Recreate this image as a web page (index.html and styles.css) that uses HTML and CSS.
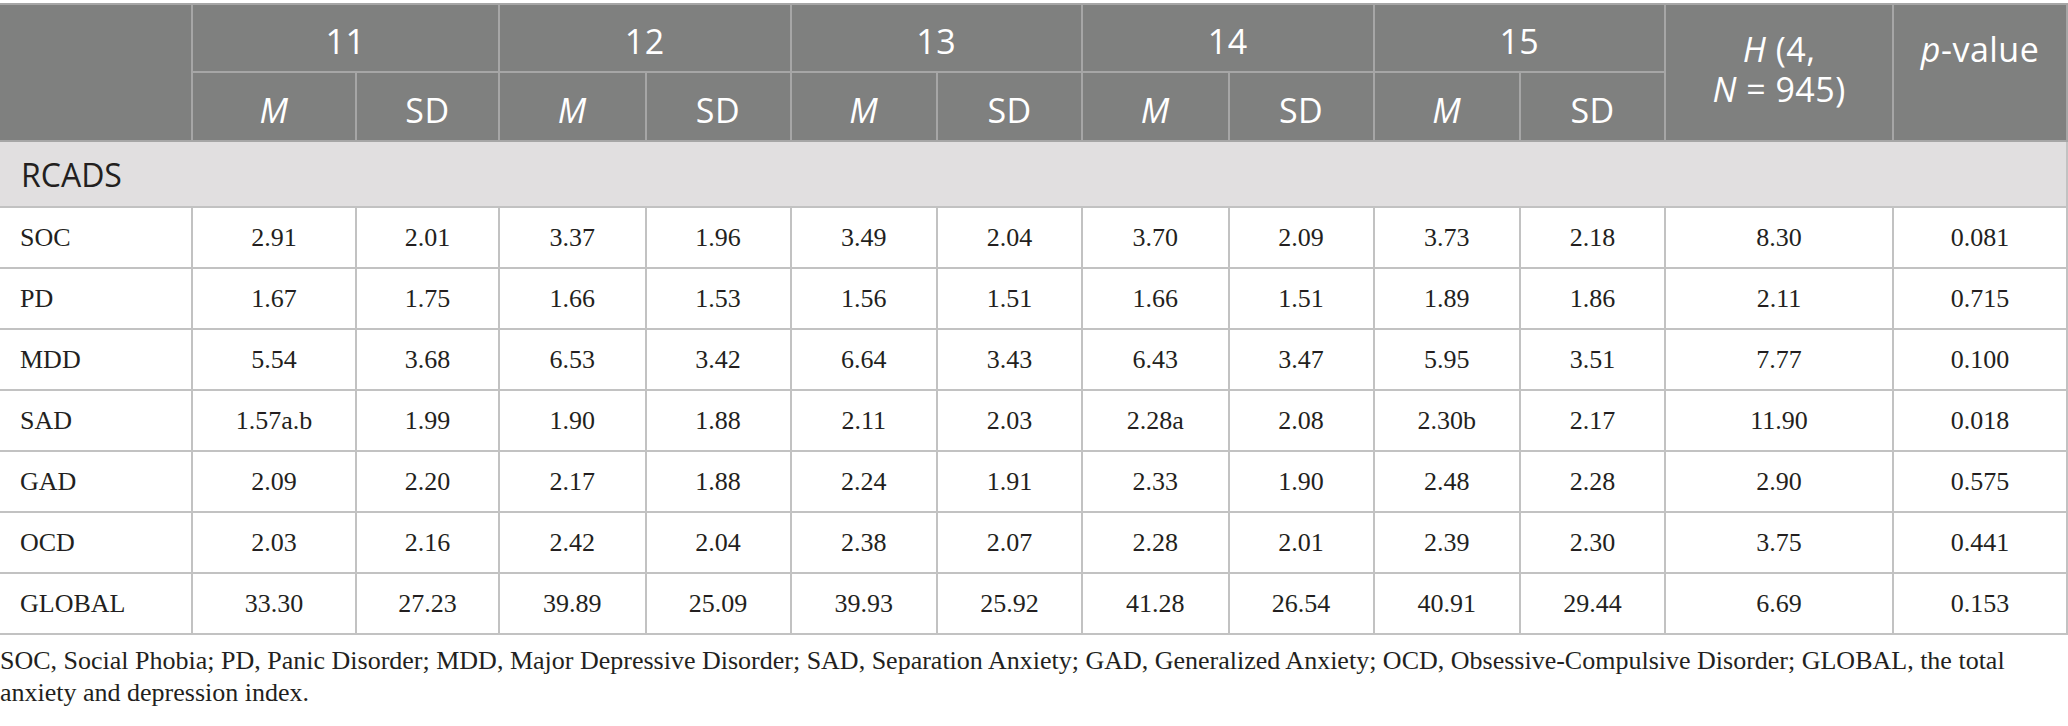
FILE: index.html
```html
<!DOCTYPE html>
<html lang="en">
<head>
    <meta charset="UTF-8">
    <title>RCADS by age</title>
    <link rel="stylesheet" href="styles.css">
</head>
<body>

    <table class="stats">
        <colgroup>
            <col class="c-label">
            <col class="c-m1"><col class="c-sd1">
            <col class="c-m"><col class="c-sd">
            <col class="c-m"><col class="c-sd">
            <col class="c-m"><col class="c-sd">
            <col class="c-m"><col class="c-sd">
            <col class="c-h">
            <col class="c-p">
        </colgroup>
        <thead>
            <tr class="head-top">
                <th rowspan="2"></th>
                <th colspan="2">11</th>
                <th colspan="2">12</th>
                <th colspan="2">13</th>
                <th colspan="2">14</th>
                <th colspan="2">15</th>
                <th rowspan="2" class="tall"><i>H</i> (4,<br><i>N</i> = 945)</th>
                <th rowspan="2" class="tall"><i>p</i>-value</th>
            </tr>
            <tr class="head-sub">
                <th><i>M</i></th><th>SD</th>
                <th><i>M</i></th><th>SD</th>
                <th><i>M</i></th><th>SD</th>
                <th><i>M</i></th><th>SD</th>
                <th><i>M</i></th><th>SD</th>
            </tr>
        </thead>
        <tbody>
            <tr class="section">
                <td colspan="13">RCADS</td>
            </tr>
            <tr>
                <td>SOC</td>
                <td>2.91</td><td>2.01</td><td>3.37</td><td>1.96</td><td>3.49</td><td>2.04</td>
                <td>3.70</td><td>2.09</td><td>3.73</td><td>2.18</td><td>8.30</td><td>0.081</td>
            </tr>
            <tr>
                <td>PD</td>
                <td>1.67</td><td>1.75</td><td>1.66</td><td>1.53</td><td>1.56</td><td>1.51</td>
                <td>1.66</td><td>1.51</td><td>1.89</td><td>1.86</td><td>2.11</td><td>0.715</td>
            </tr>
            <tr>
                <td>MDD</td>
                <td>5.54</td><td>3.68</td><td>6.53</td><td>3.42</td><td>6.64</td><td>3.43</td>
                <td>6.43</td><td>3.47</td><td>5.95</td><td>3.51</td><td>7.77</td><td>0.100</td>
            </tr>
            <tr>
                <td>SAD</td>
                <td>1.57a.b</td><td>1.99</td><td>1.90</td><td>1.88</td><td>2.11</td><td>2.03</td>
                <td>2.28a</td><td>2.08</td><td>2.30b</td><td>2.17</td><td>11.90</td><td>0.018</td>
            </tr>
            <tr>
                <td>GAD</td>
                <td>2.09</td><td>2.20</td><td>2.17</td><td>1.88</td><td>2.24</td><td>1.91</td>
                <td>2.33</td><td>1.90</td><td>2.48</td><td>2.28</td><td>2.90</td><td>0.575</td>
            </tr>
            <tr>
                <td>OCD</td>
                <td>2.03</td><td>2.16</td><td>2.42</td><td>2.04</td><td>2.38</td><td>2.07</td>
                <td>2.28</td><td>2.01</td><td>2.39</td><td>2.30</td><td>3.75</td><td>0.441</td>
            </tr>
            <tr>
                <td>GLOBAL</td>
                <td>33.30</td><td>27.23</td><td>39.89</td><td>25.09</td><td>39.93</td><td>25.92</td>
                <td>41.28</td><td>26.54</td><td>40.91</td><td>29.44</td><td>6.69</td><td>0.153</td>
            </tr>
        </tbody>
    </table>

    <p class="note">SOC, Social Phobia; PD, Panic Disorder; MDD, Major Depressive Disorder; SAD, Separation Anxiety; GAD, Generalized Anxiety; OCD, Obsessive-Compulsive Disorder; GLOBAL, the total anxiety and depression index.</p>

</body>
</html>
```

FILE: styles.css
```css
body {
    margin: 0;
    padding: 3px 0 0;
    background-color: #fff;
    color: #231f20;
}

.stats {
    width: 2068px;
    border-collapse: collapse;
    table-layout: fixed;
    border-top: 2px solid #b4b4b4;
    border-bottom: 2px solid #bdbdbd;
}

.c-label { width: 192px; }
.c-m1 { width: 164px; }
.c-sd1 { width: 143px; }
.c-m { width: 146.5px; }
.c-sd { width: 145px; }
.c-h { width: 228px; }
.c-p { width: 174px; }

.stats th {
    background-color: #7f807f;
    color: #fff;
    font-family: "Open Sans", sans-serif;
    font-weight: 400;
    font-size: 34px;
    letter-spacing: 0.5px;
    line-height: 40px;
    text-align: center;
    border: 2px solid #a6a6a6;
    padding: 6px 8px 0;
}

.stats th:first-child {
    border-left: none;
}

.stats th i {
    font-style: italic;
}

.head-top {
    height: 68px;
}

.head-sub {
    height: 69px;
}

.stats th.tall {
    vertical-align: top;
    padding-top: 24px;
    line-height: 40px;
}

.stats td {
    font-family: "Liberation Serif", serif;
    font-size: 26px;
    text-align: center;
    border: 2px solid #c2c2c2;
    padding: 0 8px;
}

.stats td:first-child {
    text-align: left;
    padding-left: 20px;
    border-left: none;
}

.stats tbody tr {
    height: 61px;
}

.stats tr.section {
    height: 66px;
}

.stats tr.section td {
    background-color: #e1dfe0;
    font-family: "Open Sans", sans-serif;
    font-size: 32px;
    padding-left: 21px;
}

.note {
    margin: 10px 0 0;
    font-family: "Liberation Serif", serif;
    font-size: 26px;
    line-height: 32px;
    color: #231f20;
}
```
